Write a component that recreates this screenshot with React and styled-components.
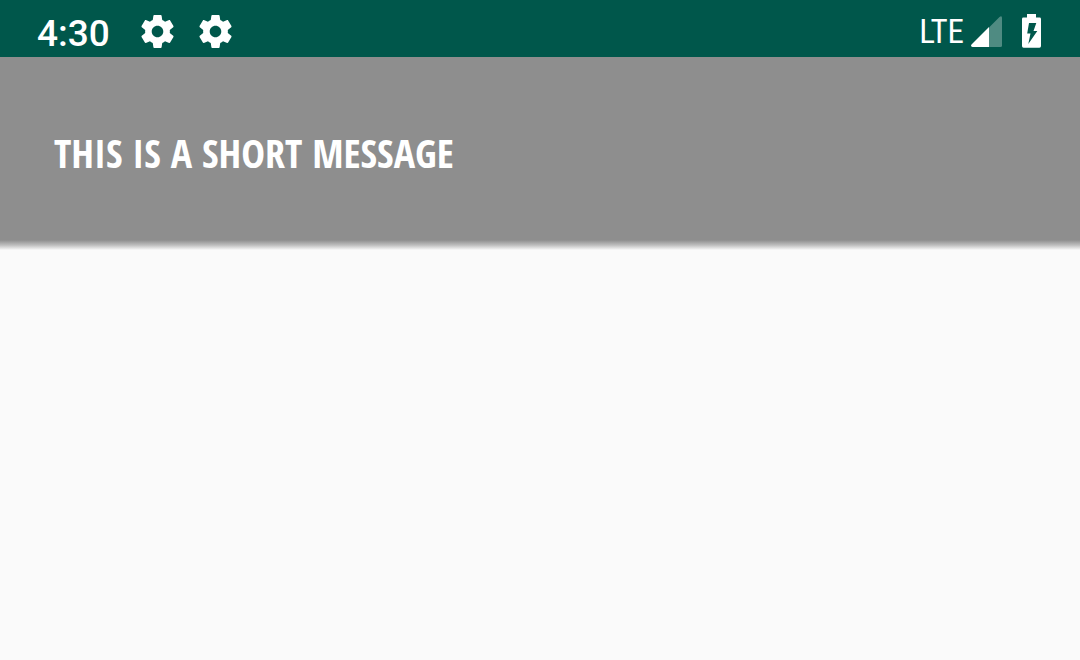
import React from "react";
import styled, { createGlobalStyle } from "styled-components";

const GlobalStyle = createGlobalStyle`
  * { box-sizing: border-box; }
  body {
    margin: 0;
    background: #fafafa;
    font-family: Roboto, "Liberation Sans", sans-serif;
    color: #fff;
  }
`;

const StatusBar = styled.header`
  display: flex;
  justify-content: space-between;
  height: 57px;
  padding: 0 38px 0 37px;
  background: #00574b;
`;

const Group = styled.div`
  display: flex;
  align-items: flex-start;
  gap: ${({ $gap }) => $gap}px;
`;

const Clock = styled.time`
  padding-top: 12px;
  font-size: 37px;
  font-weight: 500;
  line-height: 44px;
`;

const Notifications = styled(Group)`
  padding-top: 15px;
`;

const Network = styled.span`
  padding-top: 12px;
  font-family: "Roboto Condensed", Roboto, sans-serif;
  font-size: 33px;
  line-height: 40px;
`;

const Icon = styled.svg`
  display: block;
  flex: none;
`;

const Connection = styled(Group)`
  & > svg { margin-top: 16px; }
`;

const Power = styled.div`
  padding-top: 14px;
`;

const Banner = styled.main`
  display: flex;
  align-items: center;
  min-height: 183px;
  padding: 8px 54px 0;
  background: #8e8e8e;
`;

const Shadow = styled.div`
  height: 10px;
  background: linear-gradient(#8e8e8e, #bdbdbd 50%, #fafafa);
`;

const Message = styled.p`
  margin: 0;
  font-family: "Open Sans Condensed", "Liberation Sans Narrow", sans-serif;
  font-size: 40px;
  font-weight: 700;
  line-height: 56px;
`;

const Gear = () => (
  <Icon width="33" height="33" viewBox="2 2 20 20" fill="#fff" aria-hidden="true">
    <path d="M19.43 12.98c.04-.32.07-.64.07-.98s-.03-.66-.07-.98l2.11-1.65c.19-.15.24-.42.12-.64l-2-3.46c-.12-.22-.39-.3-.61-.22l-2.49 1c-.52-.4-1.08-.73-1.69-.98l-.38-2.65C14.46 2.18 14.25 2 14 2h-4c-.25 0-.46.18-.49.42l-.38 2.65c-.61.25-1.17.59-1.69.98l-2.49-1c-.23-.09-.49 0-.61.22l-2 3.46c-.13.22-.07.49.12.64l2.11 1.65c-.04.32-.07.65-.07.98s.03.66.07.98l-2.11 1.65c-.19.15-.24.42-.12.64l2 3.46c.12.22.39.3.61.22l2.49-1c.52.4 1.08.73 1.69.98l.38 2.65c.03.24.24.42.49.42h4c.25 0 .46-.18.49-.42l.38-2.65c.61-.25 1.17-.59 1.69-.98l2.49 1c.23.09.49 0 .61-.22l2-3.46c.12-.22.07-.49-.12-.64l-2.11-1.65zM12 15.5c-1.93 0-3.5-1.57-3.5-3.5s1.57-3.5 3.5-3.5 3.5 1.57 3.5 3.5-1.57 3.5-3.5 3.5z" />
  </Icon>
);

const Signal = () => (
  <Icon width="31" height="31" viewBox="0 0 31 31" role="img" aria-label="Signal strength">
    <path fill="#fff" fillOpacity=".31" d="M18 11.5 28.5 1Q31-.8 31 2V29.5Q31 31 29.5 31H18z" />
    <path fill="#fff" d="M18 11v20H1.5Q-.8 30.5.5 28.5z" />
  </Icon>
);

const Battery = () => (
  <Icon width="20" height="34" viewBox="0 0 20 34" role="img" aria-label="Battery charging">
    <path
      fill="#fff"
      fillRule="evenodd"
      d="M5 0h9v3.5h3.6q1.4 0 1.4 1.4v27q0 1.8-1.6 1.8H1.6q-1.6 0-1.6-1.8v-27q0-1.4 1.4-1.4h3.6zM7 9 5.2 19.5h3.3L6.3 30 15.3 17h-3.8l2.8-8z"
    />
  </Icon>
);

export default function App() {
  return (
    <>
      <GlobalStyle />
      <StatusBar>
        <Group $gap={31}>
          <Clock>4:30</Clock>
          <Notifications $gap={25}>
            <Gear />
            <Gear />
          </Notifications>
        </Group>
        <Group $gap={20}>
          <Connection $gap={7}>
            <Network>LTE</Network>
            <Signal />
          </Connection>
          <Power>
            <Battery />
          </Power>
        </Group>
      </StatusBar>
      <Banner>
        <Message>THIS IS A SHORT MESSAGE</Message>
      </Banner>
      <Shadow />
    </>
  );
}
